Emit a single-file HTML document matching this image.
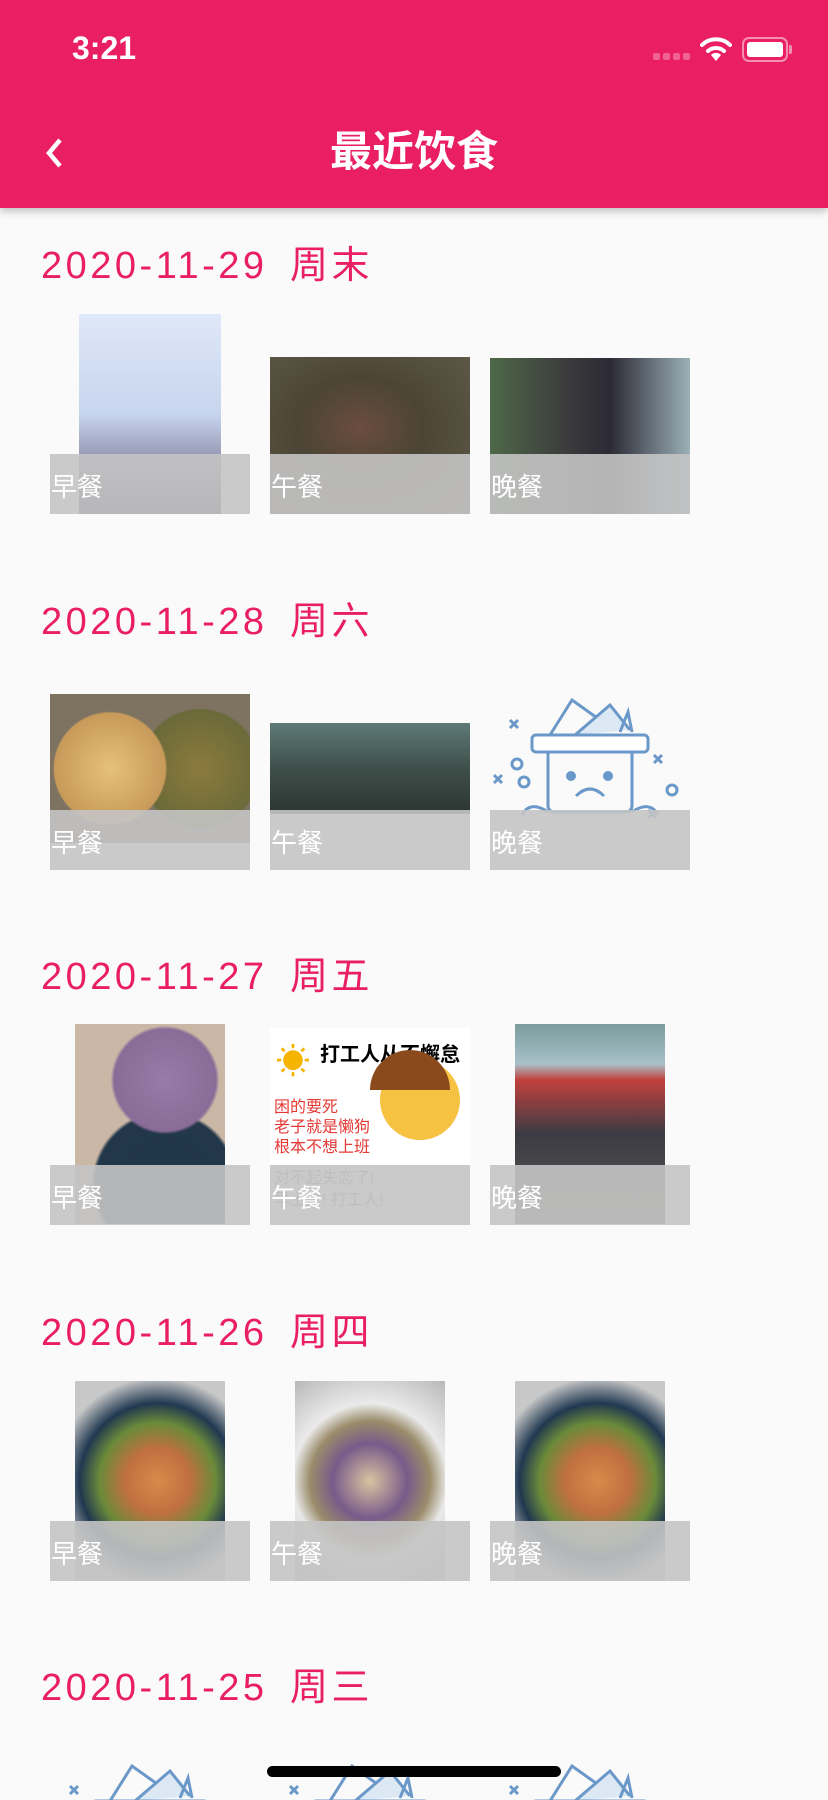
<!DOCTYPE html>
<html><head><meta charset="utf-8">
<style>
*{margin:0;padding:0;box-sizing:border-box}
body{width:828px;height:1792px;background:#fafafa;position:relative;overflow:hidden;font-family:"Liberation Sans","Noto Sans CJK SC",sans-serif}
.hdr{position:absolute;left:0;top:0;width:828px;height:208px;background:#e91e63;box-shadow:0 3px 8px rgba(0,0,0,0.25);z-index:5}
.time{position:absolute;left:72px;top:30px;color:#fff;font-size:32px;font-weight:600}
.title{position:absolute;left:0;width:828px;top:124px;text-align:center;color:#fff;font-size:42px;font-weight:bold;line-height:56px}
.date{position:absolute;left:41px;color:#e91e63;font-size:38px;line-height:44px;white-space:nowrap;letter-spacing:3.5px}
.date b{font-weight:normal;display:inline-block;width:249px}
.img{position:absolute}
.cap{position:absolute;width:200px;height:60px;background:rgba(196,196,196,0.9);color:#fff;font-size:26px;line-height:66px;padding-left:1px}
.home{position:absolute;left:267px;top:1766px;width:294px;height:11px;border-radius:6px;background:#000;z-index:6}
</style></head><body>
<div class="hdr">
<div class="time">3:21</div>
<div style="position:absolute;left:653px;top:53px;width:37px;height:7px;display:flex;gap:3px"><span style="flex:1;background:#f06292;border-radius:2px"></span><span style="flex:1;background:#f06292;border-radius:2px"></span><span style="flex:1;background:#f06292;border-radius:2px"></span><span style="flex:1;background:#f06292;border-radius:2px"></span></div>
<svg style="position:absolute;left:700px;top:36px" width="32" height="26" viewBox="0 0 32 26"><path d="M2 9 A20 20 0 0 1 30 9" stroke="#fff" stroke-width="4" fill="none" stroke-linecap="round"/><path d="M8 15 A12 12 0 0 1 24 15" stroke="#fff" stroke-width="4" fill="none" stroke-linecap="round"/><path d="M11 19 L16 25 L21 19 A7 7 0 0 0 11 19Z" fill="#fff"/></svg>
<div style="position:absolute;left:742px;top:37px;width:46px;height:25px;border:2px solid #f48fb1;border-radius:7px"><div style="position:absolute;left:3px;top:3px;width:36px;height:15px;background:#fff;border-radius:3px"></div></div>
<div style="position:absolute;left:789px;top:45px;width:3px;height:9px;background:#f48fb1;border-radius:0 2px 2px 0"></div>
<svg style="position:absolute;left:44px;top:137px" width="22" height="32" viewBox="0 0 22 32"><path d="M16 3 L5 16 L16 29" stroke="#fff" stroke-width="4.5" fill="none"/></svg>
<div class="title">最近饮食</div>
</div>

<svg width="0" height="0" style="position:absolute"><defs>
<g id="sad" fill="none" stroke="#6a98c8" stroke-width="3">
<path d="M-40 -35 L-18 -70 L10 -50" /><path d="M-15 -35 L20 -65 L40 -40" fill="#dce8f4"/><path d="M30 -38 L38 -58 L42 -38"/>
<rect x="-58" y="-35" width="116" height="17" rx="4" fill="#fff"/>
<path d="M-42 -18 V35 Q-42 42 -35 42 H35 Q42 42 42 35 V-18"/>
<circle cx="-19" cy="6" r="5" fill="#6a98c8" stroke="none"/><circle cx="18" cy="6" r="5" fill="#6a98c8" stroke="none"/>
<path d="M-14 26 Q0 12 14 26"/>
<path d="M-42 42 Q-60 30 -68 45"/><path d="M42 42 Q60 30 68 45"/>
<path d="M-80 -50 l8 8 m0 -8 l-8 8 M-96 5 l8 8 m0 -8 l-8 8 M64 -15 l8 8 m0 -8 l-8 8 M58 40 l8 8 m0 -8 l-8 8"/>
<circle cx="-73" cy="-6" r="5"/><circle cx="-66" cy="12" r="5"/><circle cx="82" cy="20" r="5"/>
</g></defs></svg>

<!-- section 1 -->
<div class="date" style="top:244px"><b>2020-11-29</b>周末</div>
<div class="img" style="left:79px;top:314px;width:142px;height:200px;background:linear-gradient(180deg,#dfe8f8 0%,#c7d5ee 50%,#8f8faa 75%,#3d3044 100%)"></div>
<div class="img" style="left:270px;top:357px;width:200px;height:157px;background:radial-gradient(ellipse at 45% 45%,#6b4c40 0%,#4c4535 40%,#605c4a 100%)"></div>
<div class="img" style="left:490px;top:358px;width:200px;height:156px;background:linear-gradient(90deg,#4e6848 0%,#3b3a3c 40%,#2c2a34 60%,#9bb0b8 100%)"></div>
<div class="cap" style="left:50px;top:454px">早餐</div><div class="cap" style="left:270px;top:454px">午餐</div><div class="cap" style="left:490px;top:454px">晚餐</div>

<!-- section 2 -->
<div class="date" style="top:600px"><b>2020-11-28</b>周六</div>
<div class="img" style="left:50px;top:694px;width:200px;height:149px;background:radial-gradient(circle at 30% 50%,#e6c07a 0%,#c79a5a 35%,transparent 36%),radial-gradient(circle at 75% 50%,#8c7a3c 0%,#6a6a3a 35%,transparent 36%),#7d7360"></div>
<div class="img" style="left:270px;top:723px;width:200px;height:91px;background:linear-gradient(180deg,#5f7a78 0%,#3e4f4a 50%,#2c3530 100%)"></div>
<svg class="img" style="left:490px;top:694px" width="200" height="150" viewBox="0 0 200 150"><use href="#sad" x="100" y="76"/></svg>
<div class="cap" style="left:50px;top:810px">早餐</div><div class="cap" style="left:270px;top:810px">午餐</div><div class="cap" style="left:490px;top:810px">晚餐</div>

<!-- section 3 -->
<div class="date" style="top:955px"><b>2020-11-27</b>周五</div>
<div class="img" style="left:75px;top:1024px;width:150px;height:200px;background:radial-gradient(circle at 60% 28%,#9a7aa8 0%,#8a6c98 30%,transparent 32%),radial-gradient(circle at 60% 80%,#1f3648 0%,#22384a 38%,transparent 40%),#cbb7a6"></div>
<div class="img" style="left:270px;top:1028px;width:200px;height:196px;background:#fff;overflow:hidden">
<div style="position:absolute;left:6px;top:6px;font-size:34px;color:#f5b400">☀</div>
<div style="position:absolute;left:50px;top:10px;font-size:20px;color:#000;font-weight:bold">打工人从不懈怠</div>
<div style="position:absolute;left:4px;top:70px;font-size:16px;color:#e53935;line-height:20px">困的要死<br>老子就是懒狗<br>根本不想上班</div>
<div style="position:absolute;left:110px;top:32px;width:80px;height:80px;border-radius:50%;background:#f5c242"></div>
<div style="position:absolute;left:100px;top:22px;width:80px;height:40px;border-radius:40px 40px 0 0;background:#8a4a1c"></div>
<div style="position:absolute;left:4px;top:140px;font-size:16px;color:#888;line-height:22px">对不起失恋了!<br>早上好! 打工人!</div>
</div>
<div class="img" style="left:515px;top:1024px;width:150px;height:200px;background:linear-gradient(180deg,#7a9c9c 0%,#a8c0c8 20%,#c0403c 28%,#3c3c44 55%,#5c5850 100%)"></div>
<div class="cap" style="left:50px;top:1165px">早餐</div><div class="cap" style="left:270px;top:1165px">午餐</div><div class="cap" style="left:490px;top:1165px">晚餐</div>

<!-- section 4 -->
<div class="date" style="top:1311px"><b>2020-11-26</b>周四</div>
<div class="img" style="left:75px;top:1381px;width:150px;height:200px;background:radial-gradient(circle at 55% 50%,#d88a4a 0%,#c07040 25%,#6a8a3a 45%,#203850 60%,#c8c8c8 80%)"></div>
<div class="img" style="left:295px;top:1381px;width:150px;height:200px;background:radial-gradient(circle at 50% 50%,#d8c4a0 0%,#7a5a8a 30%,#9a8c6a 48%,#eaeaea 62%,#b8b8b8 100%)"></div>
<div class="img" style="left:515px;top:1381px;width:150px;height:200px;background:radial-gradient(circle at 55% 50%,#d88a4a 0%,#c07040 25%,#6a8a3a 45%,#203850 60%,#c8c8c8 80%)"></div>
<div class="cap" style="left:50px;top:1521px">早餐</div><div class="cap" style="left:270px;top:1521px">午餐</div><div class="cap" style="left:490px;top:1521px">晚餐</div>

<!-- section 5 -->
<div class="date" style="top:1666px"><b>2020-11-25</b>周三</div>
<svg class="img" style="left:50px;top:1760px" width="200" height="40" viewBox="0 0 200 40"><use href="#sad" x="100" y="76"/></svg>
<svg class="img" style="left:270px;top:1760px" width="200" height="40" viewBox="0 0 200 40"><use href="#sad" x="100" y="76"/></svg>
<svg class="img" style="left:490px;top:1760px" width="200" height="40" viewBox="0 0 200 40"><use href="#sad" x="100" y="76"/></svg>

<div class="home"></div>
</body></html>
